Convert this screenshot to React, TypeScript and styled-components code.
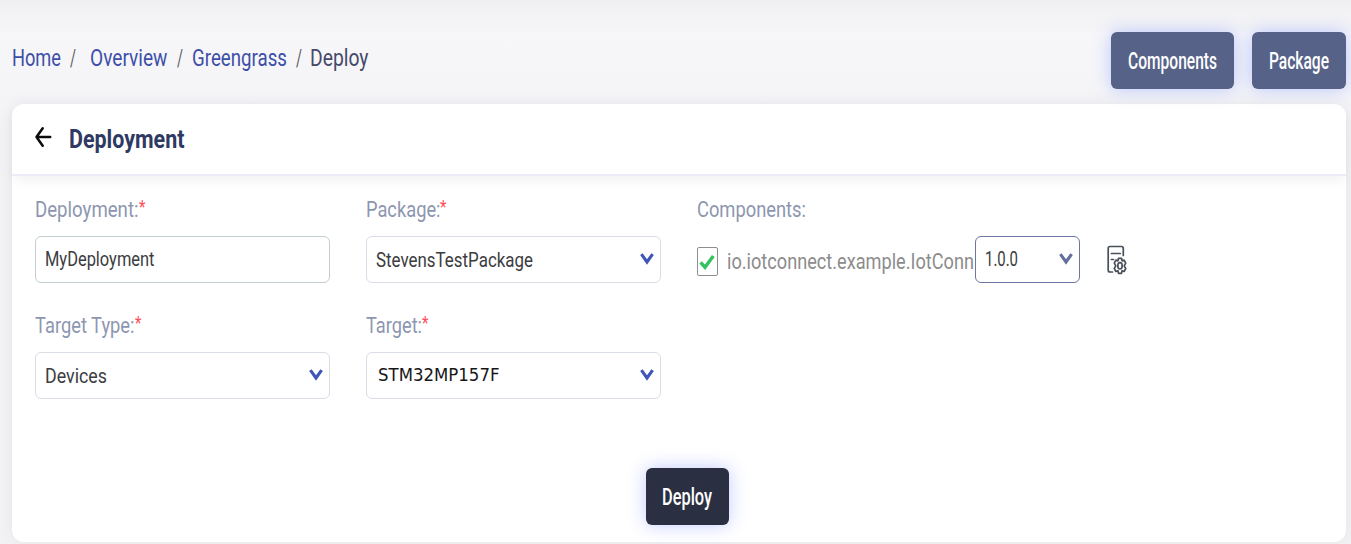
import React, { useLayoutEffect, useRef, useState } from "react";
import styled, { createGlobalStyle } from "styled-components";

const GlobalStyle = createGlobalStyle`
  * { box-sizing: border-box; }
  body {
    margin: 0;
    background: #f5f5f8;
    font-family: Roboto, "Liberation Sans", sans-serif;
    overflow: hidden;
  }
`;

const Page = styled.main`
  width: 1351px;
  height: 544px;
  overflow: hidden;
  padding: 0 5px 0 12px;
  background: linear-gradient(#efeff1 0, #f3f3f5 14px, #f4f4f6 30px, #f7f7fa 32px, #f5f5f8 90px, #f3f3f5 140px);
`;

const TopBar = styled.header`
  display: flex;
  justify-content: space-between;
  height: 104px;
`;

const Breadcrumb = styled.nav`
  display: flex;
  align-items: center;
  height: 30px;
  margin-top: 44px;
  font-size: 23px;
`;

const Crumb = styled.a<{ $current?: boolean }>`
  display: flex;
  color: ${(p) => (p.$current ? "#45496a" : "#3d4fa8")};
`;

const Slash = styled.span<{ $after: number }>`
  display: flex;
  margin: 0 ${(p) => p.$after}px 0 9px;
  color: #5f5f64;
`;

const Actions = styled.div`
  display: flex;
  gap: 18px;
  margin-top: 32px;
`;

const Button = styled.button<{ $dark?: boolean; $width: number }>`
  display: flex;
  align-items: center;
  justify-content: center;
  width: ${(p) => p.$width}px;
  height: 57px;
  padding: 0;
  border: 0;
  border-radius: 6px;
  background: ${(p) => (p.$dark ? "#2b2f42" : "#566288")};
  box-shadow: 0 0 18px rgba(92, 122, 255, 0.38);
  color: #fff;
  font-family: inherit;
  font-size: 23.5px;
  font-weight: 500;
`;

const Card = styled.section`
  height: 438px;
  border-radius: 12px;
  background: #fff;
  box-shadow: 0 0 16px rgba(60, 60, 90, 0.08);
`;

const CardHeader = styled.div`
  display: flex;
  align-items: center;
  gap: 17px;
  height: 72px;
  padding: 0 22px;
  border-bottom: 2px solid #ececf8;
  box-shadow: 0 6px 12px -2px rgba(0, 0, 0, 0.06);
`;

const Title = styled.h1`
  display: flex;
  margin: 1px 0 0;
  color: #2f3a63;
  font-size: 25px;
  font-weight: 700;
`;

const Form = styled.div`
  display: grid;
  grid-template-columns: 295px 295.5px 450px;
  column-gap: 35.5px;
  row-gap: 27px;
  padding: 18px 0 0 23px;
`;

const Field = styled.div`
  display: flex;
  flex-direction: column;
  gap: 12px;
`;

const Label = styled.label`
  display: flex;
  height: 30px;
  align-items: center;
  color: #8d96b0;
  font-size: 22.5px;
`;

const Star = styled.span`
  display: flex;
  margin-bottom: 4px;
  color: #ff4d55;
  font-size: 18px;
`;

const Control = styled.div<{ $border?: string; $width?: number }>`
  display: flex;
  align-items: center;
  justify-content: space-between;
  width: ${(p) => (p.$width ? `${p.$width}px` : "100%")};
  height: 47px;
  padding: 0 6px 1px 9px;
  border: 1px solid ${(p) => p.$border ?? "#d9dde6"};
  border-radius: 6px;
  background: #fff;
  color: #3c3c40;
  font-size: 21px;
`;

const Value = styled.span`
  display: flex;
  margin-top: 2px;
`;

const PlainValue = styled.span`
  display: flex;
  margin: 0 0 1px 2px;
  color: #161618;
  font-family: "DejaVu Sans", sans-serif;
  font-size: 18px;
`;

const ComponentRow = styled.div`
  display: flex;
  align-items: center;
  height: 47px;
`;

const Checkbox = styled.span`
  display: flex;
  align-items: center;
  justify-content: center;
  width: 21.5px;
  height: 29px;
  margin: 4px 8.5px 0 0;
  border: 1.5px solid #8e8e8e;
  border-radius: 2px;
`;

const ComponentName = styled.span`
  display: flex;
  margin: 2px 1px 0 0;
  color: #8c8c8c;
  font-size: 22.5px;
`;

const Footer = styled.div`
  display: flex;
  justify-content: center;
  padding: 69px 0 0 16px;
`;

const ConfigButton = styled.span`
  display: flex;
  margin: 1px 0 0 27px;
`;

const FitBox = styled.span`
  display: inline-block;
  line-height: 30px;
  white-space: nowrap;
  text-align: left;
`;

const FitText = styled.span`
  display: inline-block;
  transform-origin: 0 50%;
`;

/* Condenses a run of text horizontally so that it takes exactly `width` pixels. */
function Fit({ width, children }: { width: number; children: string }) {
  const ref = useRef<HTMLSpanElement>(null);
  const [scale, setScale] = useState(1);
  useLayoutEffect(() => {
    if (ref.current) setScale(width / parseFloat(getComputedStyle(ref.current).width));
  }, [width, children]);
  return (
    <FitBox style={{ width }}>
      <FitText ref={ref} style={{ transform: `scaleX(${scale})` }}>
        {children}
      </FitText>
    </FitBox>
  );
}

function Chevron({ color = "#3f56b8" }: { color?: string }) {
  return (
    <svg width="14" height="12" viewBox="0 0 14 12" fill="none">
      <path d="M1.4 1.2 7 9l5.6-7.8" stroke={color} strokeWidth="3.1" />
    </svg>
  );
}

const ArrowSlot = styled.span`
  display: flex;
  margin-bottom: 4px;
`;

function BackArrow() {
  return (
    <svg width="18" height="22" viewBox="0 0 18 22" fill="none" stroke="#0b0b0b" strokeWidth="2.5" strokeLinecap="round" strokeLinejoin="round">
      <path d="M16.2 11H2.500M8.700 2.300 2.500 11l6.200 8.700" />
    </svg>
  );
}

function Tick() {
  return (
    <svg width="16" height="16" viewBox="0 0 16 16" fill="none">
      <path d="M1.600 8.300 6 13.200 14.300 2" stroke="#35c25e" strokeWidth="3.4" />
    </svg>
  );
}

function ConfigIcon() {
  return (
    <svg width="20" height="30" viewBox="0 0 20 30" fill="none" stroke="#4a4f5c" strokeWidth="1.7" strokeLinejoin="round" strokeLinecap="round">
      <path d="M5.500 27H3Q1.200 27 1.200 25V3.500Q1.200 1.500 3 1.500H14.500Q16.300 1.500 16.300 3.500V10.500" />
      <path d="M4.400 8.500H13.200M4.400 14.500H6.500" />
      <path d="M11.500 13.300h3l.6 2.600 2-.8 1.600 3-1.500 2.700 1.500 2.700-1.600 3-2-.8-.6 2.600h-3l-.6-2.600-2 .8-1.600-3 1.500-2.700-1.500-2.700 1.600-3 2 .8z" />
      <ellipse cx="13" cy="20.800" rx="2.200" ry="3.200" />
    </svg>
  );
}

export default function App() {
  return (
    <Page>
      <GlobalStyle />
      <TopBar>
        <Breadcrumb>
          <Crumb><Fit width={49}>Home</Fit></Crumb>
          <Slash $after={14}><Fit width={6}>/</Fit></Slash>
          <Crumb><Fit width={77.5}>Overview</Fit></Crumb>
          <Slash $after={9}><Fit width={6}>/</Fit></Slash>
          <Crumb><Fit width={95}>Greengrass</Fit></Crumb>
          <Slash $after={8.5}><Fit width={6}>/</Fit></Slash>
          <Crumb $current><Fit width={58.5}>Deploy</Fit></Crumb>
        </Breadcrumb>
        <Actions>
          <Button $width={123}><Fit width={89}>Components</Fit></Button>
          <Button $width={94}><Fit width={60}>Package</Fit></Button>
        </Actions>
      </TopBar>
      <Card>
        <CardHeader>
          <ArrowSlot><BackArrow /></ArrowSlot>
          <Title><Fit width={115.500}>Deployment</Fit></Title>
        </CardHeader>
        <Form>
          <Field>
            <Label><Fit width={103.500}>Deployment:</Fit><Star><Fit width={6.500}>*</Fit></Star></Label>
            <Control $border="#c3ced2"><Fit width={109.500}>MyDeployment</Fit></Control>
          </Field>
          <Field>
            <Label><Fit width={74.500}>Package:</Fit><Star><Fit width={6.500}>*</Fit></Star></Label>
            <Control><Value><Fit width={157}>StevensTestPackage</Fit></Value><Chevron /></Control>
          </Field>
          <Field>
            <Label><Fit width={109}>Components:</Fit></Label>
            <ComponentRow>
              <Checkbox><Tick /></Checkbox>
              <ComponentName><Fit width={247}>io.iotconnect.example.IotConn</Fit></ComponentName>
              <Control $border="#6b76a3" $width={105}><Fit width={33}>1.0.0</Fit><Chevron color="#64709c" /></Control>
              <ConfigButton><ConfigIcon /></ConfigButton>
            </ComponentRow>
          </Field>
          <Field>
            <Label><Fit width={99.500}>Target Type:</Fit><Star><Fit width={6.500}>*</Fit></Star></Label>
            <Control><Value><Fit width={62}>Devices</Fit></Value><Chevron /></Control>
          </Field>
          <Field>
            <Label><Fit width={56}>Target:</Fit><Star><Fit width={6.500}>*</Fit></Star></Label>
            <Control><PlainValue><Fit width={121.500}>STM32MP157F</Fit></PlainValue><Chevron /></Control>
          </Field>
        </Form>
        <Footer>
          <Button $dark $width={83}><Fit width={50}>Deploy</Fit></Button>
        </Footer>
      </Card>
    </Page>
  );
}
